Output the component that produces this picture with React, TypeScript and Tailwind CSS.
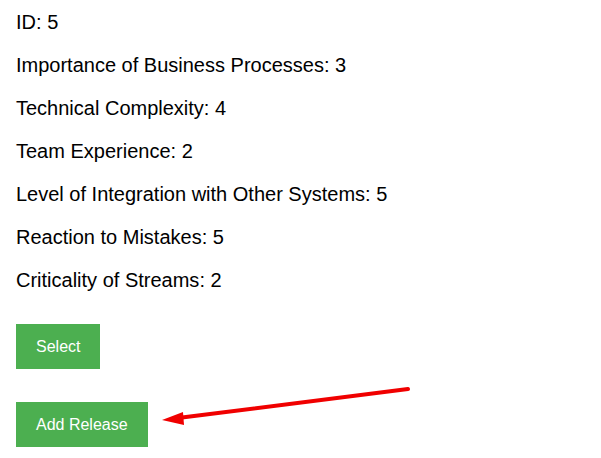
import React from "react";

const fields = [
  { label: "ID", value: 5 },
  { label: "Importance of Business Processes", value: 3 },
  { label: "Technical Complexity", value: 4 },
  { label: "Team Experience", value: 2 },
  { label: "Level of Integration with Other Systems", value: 5 },
  { label: "Reaction to Mistakes", value: 5 },
  { label: "Criticality of Streams", value: 2 },
];

export default function App() {
  return (
    <div className="relative w-[601px] h-[458px] bg-white overflow-hidden font-['Liberation_Sans',Arial,sans-serif] text-black">
      <div className="flex flex-col px-4 pt-[11px]">
        <div className="flex flex-col gap-5">
          {fields.map((f) => (
            <p key={f.label} className="text-[20px] leading-[23px]">
              {f.label}: {f.value}
            </p>
          ))}
        </div>

        <div className="flex flex-col items-start gap-[33px] mt-8">
          <button className="h-[45px] px-5 bg-[#4caf50] text-white text-[16px]">
            Select
          </button>
          <button className="h-[45px] px-5 bg-[#4caf50] text-white text-[16px]">
            Add Release
          </button>
        </div>
      </div>

      {/* annotation arrow */}
      <svg
        className="absolute left-0 top-0 pointer-events-none"
        width="601"
        height="458"
      >
        <line
          x1="408"
          y1="389"
          x2="178"
          y2="418"
          stroke="#f00000"
          strokeWidth="4"
          strokeLinecap="round"
        />
        <polygon points="162,420 183,412 184,425" fill="#f00000" />
      </svg>
    </div>
  );
}
